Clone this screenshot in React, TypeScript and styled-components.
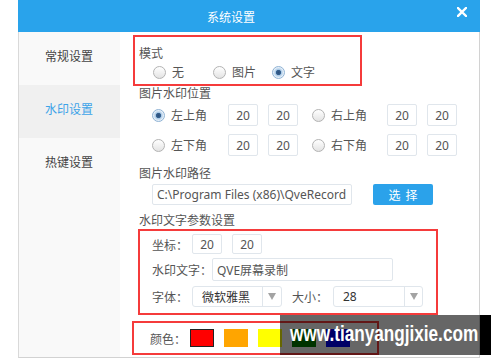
import React from "react";
import styled, { createGlobalStyle } from "styled-components";

const Global = createGlobalStyle`
  html, body { margin: 0; padding: 0; background: #fff; }
  body {
    font-family: "Noto Sans", "Noto Sans CJK SC", sans-serif;
    font-size: 12px;
    color: #555;
  }
  * { box-sizing: border-box; }
`;

const Page = styled.div`
  position: relative;
  width: 500px;
  height: 362px;
  overflow: hidden;
`;

const Dialog = styled.div`
  margin-left: 18px;
  width: 462px;
  height: 358px;
  display: flex;
  flex-direction: column;
`;

const TitleBar = styled.div`
  height: 32px;
  flex: none;
  background: #29a3eb;
  display: flex;
  align-items: center;
  position: relative;
  padding-left: 189px;
`;

const Title = styled.span`
  font-family: "Noto Sans CJK SC", sans-serif;
  color: #fff;
  font-size: 12px;
  line-height: 16px;
  margin-top: 1px;
`;

const Close = styled.svg`
  position: absolute;
  right: 13px;
  top: 7px;
`;

const Body = styled.div`
  flex: 1;
  display: flex;
  border-left: 1px solid #d9d9d9;
  border-right: 1px solid #d2d2d2;
  border-bottom: 1px solid #d2d2d2;
`;

const Sidebar = styled.div`
  width: 101px;
  flex: none;
  background: #f9f9f9;
`;

const NavItem = styled.div<{ $active?: boolean }>`
  height: 53px;
  padding: 15px 0 0 26px;
  font-family: "Noto Sans CJK SC", sans-serif;
  font-size: 12px;
  line-height: 17px;
  color: ${(p) => (p.$active ? "#3da3e8" : "#444")};
  background: ${(p) => (p.$active ? "#f0f0f0" : "transparent")};
`;

const Content = styled.div`
  flex: 1;
  padding-top: 3px;
  display: flex;
  flex-direction: column;
  background: #fff;
`;

const RedBox = styled.div<{ $left: number; $w: number; $h: number; $mt?: number }>`
  margin-left: ${(p) => p.$left}px;
  margin-top: ${(p) => p.$mt ?? 0}px;
  width: ${(p) => p.$w}px;
  height: ${(p) => p.$h}px;
  border: 2px solid #f53b3b;
  flex: none;
`;

const ModeInner = styled.div`
  padding: 8px 0 0 4px;
`;

const Label = styled.div<{ $mt?: number; $ml?: number }>`
  font-family: "Noto Sans CJK SC", sans-serif;
  font-size: 12px;
  line-height: 14px;
  color: #555;
  margin-top: ${(p) => p.$mt ?? 0}px;
  margin-left: ${(p) => p.$ml ?? 0}px;
`;

const ModeLabel = styled(Label)`
  line-height: 16px;
`;

const RadioRow = styled.div`
  display: flex;
  margin-top: 3px;
  padding-left: 14px;
  height: 16px;
  align-items: center;
`;

const Option = styled.div<{ $w: number }>`
  width: ${(p) => p.$w}px;
  flex: none;
  display: flex;
  align-items: center;
  gap: 6px;
  font-family: "Noto Sans CJK SC", sans-serif;
  font-size: 12px;
  color: #555;
  line-height: 16px;
`;

const Radio = styled.span<{ $checked?: boolean }>`
  width: 13px;
  height: 13px;
  flex: none;
  border-radius: 50%;
  border: 1px solid ${(p) => (p.$checked ? "#8eb2d4" : "#b3b3b3")};
  background: ${(p) =>
    p.$checked
      ? "radial-gradient(circle, #2c4f7c 0, #35608f 2.2px, #a9c9e6 3px, #e4eef8 5px, #f4f8fc 6px)"
      : "linear-gradient(#ffffff, #e3e3e3)"};
`;

const PosRow = styled.div<{ $mt: number }>`
  display: flex;
  align-items: center;
  height: 22px;
  margin-top: ${(p) => p.$mt}px;
  padding-left: 32px;
`;

const Pair = styled.div<{ $mr?: number }>`
  display: flex;
  gap: 10px;
  margin-right: ${(p) => p.$mr ?? 0}px;
`;

const Field = styled.div<{ $w: number; $h: number }>`
  width: ${(p) => p.$w}px;
  height: ${(p) => p.$h}px;
  flex: none;
  border: 1px solid #e0e6ec;
  border-radius: 2px;
  background: #fff;
  color: #555;
  font-size: 12px;
  display: flex;
  align-items: center;
  overflow: hidden;
  white-space: nowrap;
`;

const NumField = styled(Field)`
  justify-content: center;
`;

const TextField = styled(Field)`
  padding-left: 4px;
`;

const PathRow = styled.div`
  display: flex;
  margin-top: 4px;
  padding-left: 32px;
  height: 21px;
`;

const Button = styled.div`
  margin-left: 21px;
  width: 60px;
  height: 21px;
  border-radius: 2px;
  background: #2ba2ea;
  color: #fff;
  font-family: "Noto Sans CJK SC", sans-serif;
  font-size: 12px;
  letter-spacing: 5px;
  padding-left: 5px;
  display: flex;
  align-items: center;
  justify-content: center;
`;

const ParamInner = styled.div`
  padding: 3px 0 0 12px;
  display: flex;
  flex-direction: column;
`;

const ParamRow = styled.div<{ $mt: number; $h: number }>`
  display: flex;
  align-items: center;
  margin-top: ${(p) => p.$mt}px;
  height: ${(p) => p.$h}px;
`;

const FieldLabel = styled.span<{ $w: number; $ml?: number }>`
  width: ${(p) => p.$w}px;
  margin-left: ${(p) => p.$ml ?? 0}px;
  flex: none;
  white-space: nowrap;
  font-family: "Noto Sans CJK SC", sans-serif;
  font-size: 12px;
  color: #555;
`;

const Select = styled.div`
  width: 90px;
  height: 21px;
  flex: none;
  border: 1px solid #e0e6ec;
  border-radius: 3px;
  display: flex;
  align-items: center;
  background: #fff;
`;

const SelectValue = styled.span`
  flex: 1;
  padding-left: 9px;
  font-size: 12px;
  color: #333;
  font-family: "Noto Sans", "Noto Sans CJK SC", sans-serif;
`;

const ArrowBox = styled.span<{ $w: number }>`
  width: ${(p) => p.$w}px;
  height: 100%;
  flex: none;
  border-left: 1px solid #e0e6ec;
  display: flex;
  align-items: center;
  justify-content: center;
  &::after {
    content: "";
    border-left: 4.5px solid transparent;
    border-right: 4.5px solid transparent;
    border-top: 7px solid #a3a3a3;
  }
`;

const ColorInner = styled.div`
  height: 100%;
  display: flex;
  align-items: center;
  padding-left: 16px;
`;

const ColorLabel = styled.span`
  font-family: "Noto Sans CJK SC", sans-serif;
  font-size: 12px;
  color: #555;
  width: 40px;
  flex: none;
  white-space: nowrap;
`;

const Swatch = styled.span<{ $c: string; $sel?: boolean }>`
  width: 24px;
  height: 18px;
  flex: none;
  margin-right: 10px;
  background: ${(p) => p.$c};
  border: ${(p) => (p.$sel ? "1px solid #222" : "none")};
`;

const Watermark = styled.div`
  position: absolute;
  left: 280px;
  top: 315px;
  width: 200px;
  height: 40px;
  background: rgba(0, 0, 0, 0.6);
  overflow: hidden;
`;

const WatermarkEdge = styled.div`
  position: absolute;
  left: 480px;
  top: 315px;
  width: 11px;
  height: 40px;
  background: #000;
`;

const WatermarkText = styled.span`
  position: absolute;
  left: 10px;
  top: 6px;
  font-family: "Liberation Sans", Arial, sans-serif;
  font-weight: bold;
  font-size: 22px;
  line-height: 26px;
  color: #fff;
  white-space: nowrap;
  transform: scaleX(0.78);
  transform-origin: left center;
`;

export default function App() {
  return (
    <>
      <Global />
      <Page>
        <Dialog>
          <TitleBar>
            <Title>系统设置</Title>
            <Close width="10" height="10" viewBox="0 0 10 10">
              <path d="M1 1 L9 9 M9 1 L1 9" stroke="#fff" strokeWidth="2.4" strokeLinecap="square" />
            </Close>
          </TitleBar>
          <Body>
            <Sidebar>
              <NavItem>常规设置</NavItem>
              <NavItem $active>水印设置</NavItem>
              <NavItem>热键设置</NavItem>
            </Sidebar>
            <Content>
              <RedBox $left={13} $w={229} $h={51}>
                <ModeInner>
                  <ModeLabel>模式</ModeLabel>
                  <RadioRow>
                    <Option $w={60}>
                      <Radio />无
                    </Option>
                    <Option $w={59}>
                      <Radio />图片
                    </Option>
                    <Option $w={60}>
                      <Radio $checked />文字
                    </Option>
                  </RadioRow>
                </ModeInner>
              </RedBox>

              <Label $ml={19}>图片水印位置</Label>
              <PosRow $mt={4}>
                <Option $w={76}>
                  <Radio $checked />左上角
                </Option>
                <Pair $mr={14}>
                  <NumField $w={30} $h={22}>20</NumField>
                  <NumField $w={30} $h={22}>20</NumField>
                </Pair>
                <Option $w={75}>
                  <Radio />右上角
                </Option>
                <Pair>
                  <NumField $w={30} $h={22}>20</NumField>
                  <NumField $w={30} $h={22}>20</NumField>
                </Pair>
              </PosRow>
              <PosRow $mt={8}>
                <Option $w={76}>
                  <Radio />左下角
                </Option>
                <Pair $mr={14}>
                  <NumField $w={30} $h={22}>20</NumField>
                  <NumField $w={30} $h={22}>20</NumField>
                </Pair>
                <Option $w={75}>
                  <Radio />右下角
                </Option>
                <Pair>
                  <NumField $w={30} $h={22}>20</NumField>
                  <NumField $w={30} $h={22}>20</NumField>
                </Pair>
              </PosRow>

              <Label $ml={19} $mt={10}>图片水印路径</Label>
              <PathRow>
                <TextField $w={200} $h={21}>C:\Program Files (x86)\QveRecord</TextField>
                <Button>选择</Button>
              </PathRow>

              <Label $ml={19} $mt={8}>水印文字参数设置</Label>
              <RedBox $left={18} $w={300} $h={86} $mt={2}>
                <ParamInner>
                  <ParamRow $mt={0} $h={20}>
                    <FieldLabel $w={40}>坐标：</FieldLabel>
                    <Pair>
                      <NumField $w={30} $h={20}>20</NumField>
                      <NumField $w={30} $h={20}>20</NumField>
                    </Pair>
                  </ParamRow>
                  <ParamRow $mt={4} $h={23}>
                    <FieldLabel $w={60}>水印文字：</FieldLabel>
                    <TextField $w={181} $h={23}>QVE屏幕录制</TextField>
                  </ParamRow>
                  <ParamRow $mt={5} $h={21}>
                    <FieldLabel $w={40}>字体：</FieldLabel>
                    <Select>
                      <SelectValue>微软雅黑</SelectValue>
                      <ArrowBox $w={19} />
                    </Select>
                    <FieldLabel $w={41} $ml={10}>大小：</FieldLabel>
                    <Select>
                      <SelectValue>28</SelectValue>
                      <ArrowBox $w={18} />
                    </Select>
                  </ParamRow>
                </ParamInner>
              </RedBox>

              <RedBox $left={12} $w={247} $h={34} $mt={6}>
                <ColorInner>
                  <ColorLabel>颜色：</ColorLabel>
                  <Swatch $c="#ff0000" $sel />
                  <Swatch $c="#ffa500" />
                  <Swatch $c="#ffff00" />
                  <Swatch $c="#008000" />
                  <Swatch $c="#0000ff" />
                </ColorInner>
              </RedBox>
            </Content>
          </Body>
        </Dialog>
        <Watermark>
          <WatermarkText>www.tianyangjixie.com</WatermarkText>
        </Watermark>
        <WatermarkEdge />
      </Page>
    </>
  );
}
